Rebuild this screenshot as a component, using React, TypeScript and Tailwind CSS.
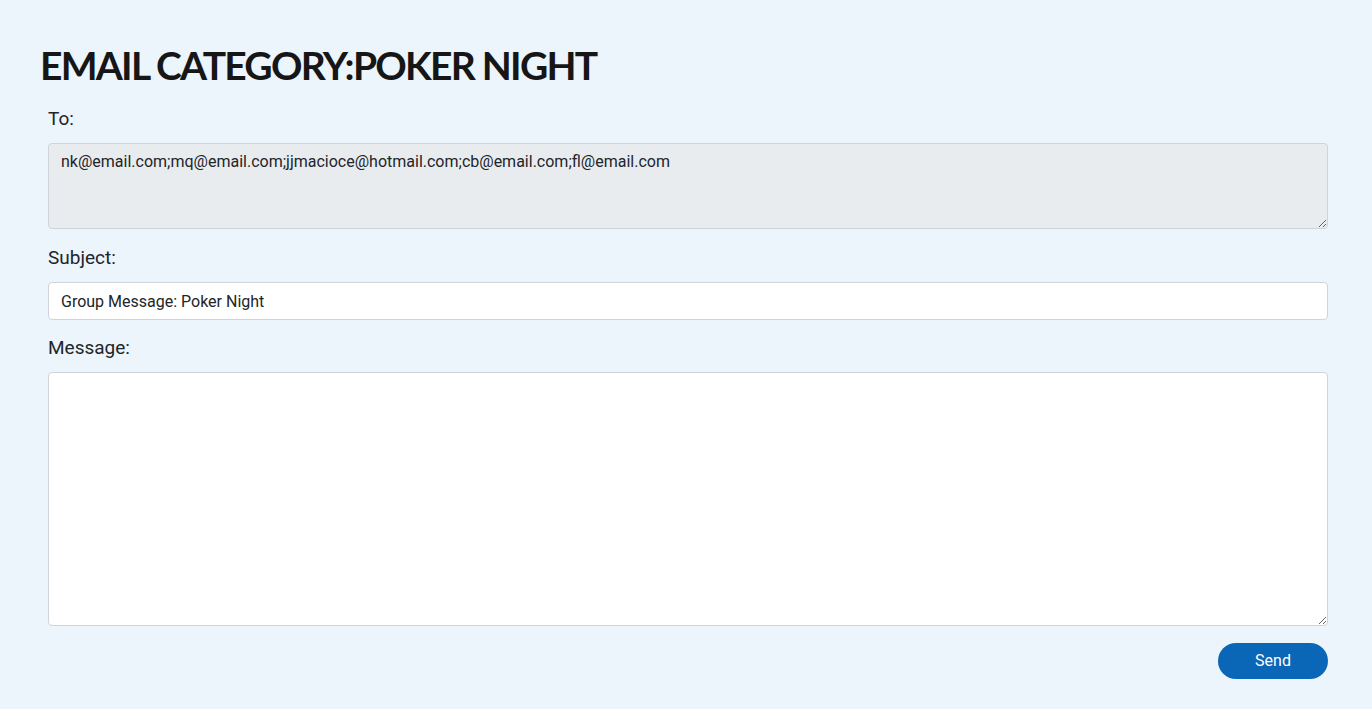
import React from 'react';

const recipients =
  'nk@email.com;mq@email.com;jjmacioce@hotmail.com;cb@email.com;fl@email.com';

// Group email composer
export default function App() {
  return (
    <div className="min-h-[709px] bg-[#ecf4fc] pl-10 pr-9 pt-[41px] font-['Roboto',sans-serif] text-[#212529]">
      <h1 className="text-[39px] leading-[48px] font-bold tracking-[-1.75px] text-[#161616] font-['Lato','Open_Sans',sans-serif]">
        EMAIL CATEGORY:POKER NIGHT
      </h1>

      <form className="px-2 pt-[16px]" onSubmit={(e) => e.preventDefault()}>
        {/* To */}
        <label htmlFor="to" className="block text-[19px] leading-[28px] mb-[10px]">
          To:
        </label>
        <textarea
          id="to"
          readOnly
          defaultValue={recipients}
          className="block w-full h-[86px] rounded-[4px] border border-[#ced4da] bg-[#e9ecef] px-3 py-[6px] text-[16px] leading-6 text-[#212529] outline-none"
        />

        {/* Subject */}
        <label htmlFor="subject" className="block text-[19px] leading-[28px] mt-[15px] mb-[10px]">
          Subject:
        </label>
        <input
          id="subject"
          type="text"
          defaultValue="Group Message: Poker Night"
          className="block w-full h-[38px] rounded-[4px] border border-[#ced4da] bg-white px-3 text-[16px] text-[#212529] outline-none"
        />

        {/* Message */}
        <label htmlFor="message" className="block text-[19px] leading-[28px] mt-[14px] mb-[10px]">
          Message:
        </label>
        <textarea
          id="message"
          className="block w-full h-[254px] rounded-[4px] border border-[#ced4da] bg-white px-3 py-[6px] text-[16px] outline-none"
        />

        <div className="flex justify-end mt-[17px]">
          <button
            type="submit"
            className="h-9 w-[110px] rounded-full bg-[#0a66b7] text-[16px] font-normal text-white"
          >
            Send
          </button>
        </div>
      </form>
    </div>
  );
}
